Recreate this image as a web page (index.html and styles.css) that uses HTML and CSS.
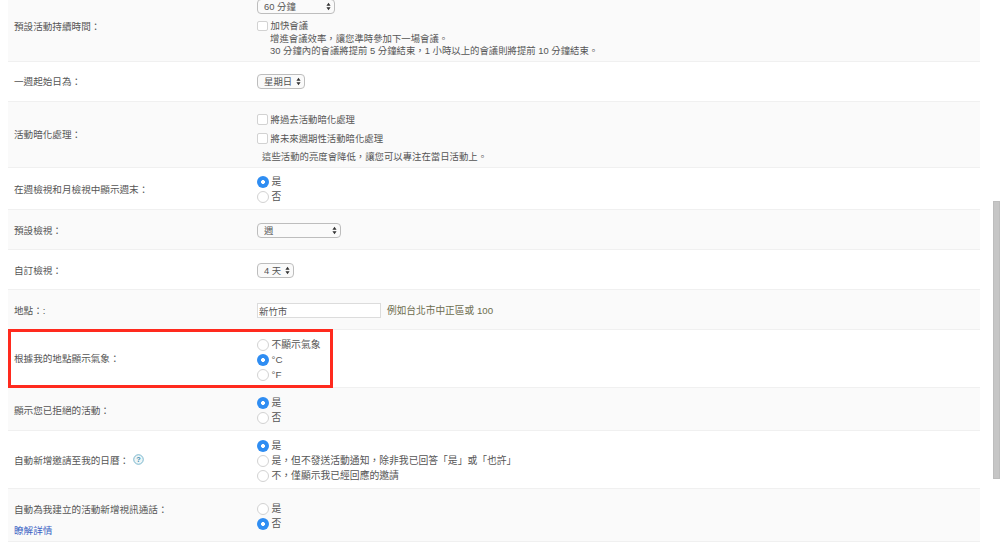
FILE: index.html
```html
<!DOCTYPE html>
<html lang="zh-Hant">
<head>
<meta charset="utf-8">
<title>日曆設定</title>
<link rel="stylesheet" href="styles.css">
</head>
<body>
<div class="settings">
  <div class="row shade">
    <div class="label label-first">預設活動持續時間：</div>
    <div class="field field-top">
      <span class="select sel-60"><select><option>60 分鐘</option></select><svg class="arrows" viewBox="0 0 6 10"><path d="M3 0.5 5.5 4H.5zM3 9.5.5 6h5z"/></svg></span>
      <label class="opt check-first"><input type="checkbox"><span>加快會議</span></label>
      <div class="note">增進會議效率，讓您準時參加下一場會議。<br>30 分鐘內的會議將提前 5 分鐘結束，1 小時以上的會議則將提前 10 分鐘結束。</div>
    </div>
  </div>
  <div class="row">
    <div class="label">一週起始日為：</div>
    <div class="field"><span class="select sel-day"><select><option>星期日</option></select><svg class="arrows" viewBox="0 0 6 10"><path d="M3 0.5 5.5 4H.5zM3 9.5.5 6h5z"/></svg></span></div>
  </div>
  <div class="row shade">
    <div class="label">活動暗化處理：</div>
    <div class="field dim-group">
      <label class="opt"><input type="checkbox"><span>將過去活動暗化處理</span></label>
      <label class="opt"><input type="checkbox"><span>將未來週期性活動暗化處理</span></label>
      <div class="note note-dim">這些活動的亮度會降低，讓您可以專注在當日活動上。</div>
    </div>
  </div>
  <div class="row low">
    <div class="label">在週檢視和月檢視中顯示週末：</div>
    <div class="field radios">
      <label class="opt"><input type="radio" name="weekend" checked><span>是</span></label>
      <label class="opt"><input type="radio" name="weekend"><span>否</span></label>
    </div>
  </div>
  <div class="row shade low">
    <div class="label">預設檢視：</div>
    <div class="field"><span class="select sel-view"><select><option>週</option></select><svg class="arrows" viewBox="0 0 6 10"><path d="M3 0.5 5.5 4H.5zM3 9.5.5 6h5z"/></svg></span></div>
  </div>
  <div class="row low">
    <div class="label">自訂檢視：</div>
    <div class="field"><span class="select sel-days"><select><option>4 天</option></select><svg class="arrows" viewBox="0 0 6 10"><path d="M3 0.5 5.5 4H.5zM3 9.5.5 6h5z"/></svg></span></div>
  </div>
  <div class="row shade low">
    <div class="label">地點：:</div>
    <div class="field field-inline"><input class="text" type="text" value="新竹市"><span class="hint">例如台北市中正區或 100</span></div>
  </div>
  <div class="row highlighted">
    <div class="label">根據我的地點顯示氣象：</div>
    <div class="field radios">
      <label class="opt"><input type="radio" name="weather"><span>不顯示氣象</span></label>
      <label class="opt"><input type="radio" name="weather" checked><span>°C</span></label>
      <label class="opt"><input type="radio" name="weather"><span>°F</span></label>
    </div>
  </div>
  <div class="row shade low">
    <div class="label">顯示您已拒絕的活動：</div>
    <div class="field radios">
      <label class="opt"><input type="radio" name="declined" checked><span>是</span></label>
      <label class="opt"><input type="radio" name="declined"><span>否</span></label>
    </div>
  </div>
  <div class="row low">
    <div class="label label-help">自動新增邀請至我的日曆：<svg class="help" viewBox="0 0 12 12"><circle cx="6" cy="6" r="5.2"/><text x="6" y="9" text-anchor="middle">?</text></svg></div>
    <div class="field radios">
      <label class="opt"><input type="radio" name="invite" checked><span>是</span></label>
      <label class="opt"><input type="radio" name="invite"><span>是，但不發送活動通知，除非我已回答「是」或「也許」</span></label>
      <label class="opt"><input type="radio" name="invite"><span>不，僅顯示我已經回應的邀請</span></label>
    </div>
  </div>
  <div class="row shade">
    <div class="label label-stack"><span>自動為我建立的活動新增視訊通話：</span><a href="#">瞭解詳情</a></div>
    <div class="field radios">
      <label class="opt"><input type="radio" name="video"><span>是</span></label>
      <label class="opt"><input type="radio" name="video" checked><span>否</span></label>
    </div>
  </div>
</div>
<div class="scrollbar"></div>
</body>
</html>
```

FILE: styles.css
```css
html {
  overflow: hidden;
  height: 100%;
}
body {
  margin: 0 20px 0 8px;
  background: #fff;
  color: #555;
  font-family: "Liberation Sans", "Noto Sans CJK TC", sans-serif;
  font-size: 9.4px;
  line-height: 12px;
}
.settings {
  display: grid;
  grid-template-rows: 62px 40px 66px 42px 40px 40px 40px 58px 43px 58px 53px;
}
.row {
  display: flex;
  align-items: center;
  box-sizing: border-box;
  border-bottom: 1px solid #f0f0f0;
  position: relative;
}
.shade {
  background: #fafafa;
}
.highlighted::after {
  content: "";
  position: absolute;
  left: 0;
  top: -1px;
  width: 325px;
  height: 59px;
  box-sizing: border-box;
  border: 3px solid #ff2a1e;
  pointer-events: none;
}
.label {
  flex: 0 0 249px;
  box-sizing: border-box;
  padding-left: 6px;
  font-size: 9.6px;
  padding-top: 1px;
}
.low .label {
  padding-top: 3px;
}
.low .field {
  padding-top: 2px;
}
.label-first {
  align-self: flex-start;
  padding-top: 21px;
}
.label-help {
  display: flex;
  align-items: center;
  gap: 4px;
}
.help {
  width: 11px;
  height: 11px;
  margin: -4px 0 0 0;
}
.help circle {
  fill: #eef6f8;
  stroke: #6fb0c8;
  stroke-width: 1;
}
.help text {
  fill: #3f8fae;
  font: bold 8px "Liberation Sans", sans-serif;
}
.label-stack {
  display: flex;
  flex-direction: column;
  gap: 9px;
  padding-top: 10px;
}
.label-stack a {
  color: #3a63c4;
  text-decoration: none;
}
.field {
  flex: 1;
  min-width: 0;
}
.field-top {
  align-self: flex-start;
  display: flex;
  flex-direction: column;
  align-items: flex-start;
  margin-top: -1px;
}
.field-inline {
  display: flex;
  align-items: center;
  gap: 6px;
}
.opt {
  display: flex;
  align-items: center;
  gap: 3px;
}
.radios {
  display: flex;
  flex-direction: column;
  gap: 3px;
  font-size: 9.8px;
}
.row .field.radios {
  padding-top: 2px;
}
.dim-group {
  display: flex;
  flex-direction: column;
  gap: 7px;
  padding-top: 7px;
}
.check-first {
  margin: 6px 0 1px;
}
.note {
  padding-left: 13px;
}
.note-dim {
  padding-left: 5px;
  margin-top: -1px;
}
input[type="radio"],
input[type="checkbox"] {
  appearance: none;
  margin: 0;
  width: 10.5px;
  height: 10.5px;
  flex: none;
  background: #fff;
  border: 1px solid #d2d2d2;
  box-sizing: border-box;
}
input[type="checkbox"] {
  border-radius: 2px;
}
input[type="radio"] {
  border-radius: 50%;
  width: 12px;
  height: 12px;
  margin-left: -0.5px;
}
input[type="radio"]:checked {
  border: 0;
  background: radial-gradient(circle, #fff 0 1.8px, #2f8df2 2.2px);
}
.select {
  position: relative;
  display: inline-flex;
}
.select select {
  appearance: none;
  box-sizing: border-box;
  height: 15px;
  padding: 0 0 0 6px;
  background: #fafafa;
  border: 1px solid #bdbdbd;
  border-radius: 4px;
  color: #555;
  font: inherit;
  line-height: 13px;
  width: 100%;
}
.arrows {
  position: absolute;
  right: 4px;
  top: 3px;
  width: 5px;
  height: 9px;
  fill: #333;
}
.sel-60 { width: 78px; }
.sel-day { width: 48px; }
.sel-view { width: 84px; }
.sel-days { width: 37px; }
.text {
  box-sizing: border-box;
  width: 124px;
  height: 15px;
  padding: 0 1px;
  background: #fff;
  border: 1px solid #dcdcdc;
  color: #555;
  font: inherit;
}
.hint {
  color: #6d6d4e;
  font-size: 9.7px;
}
.scrollbar {
  position: fixed;
  left: 993px;
  top: 201px;
  width: 7px;
  height: 278px;
  background: #c6c6c6;
  border: 1px solid #bdbdbd;
  box-sizing: border-box;
}
```
